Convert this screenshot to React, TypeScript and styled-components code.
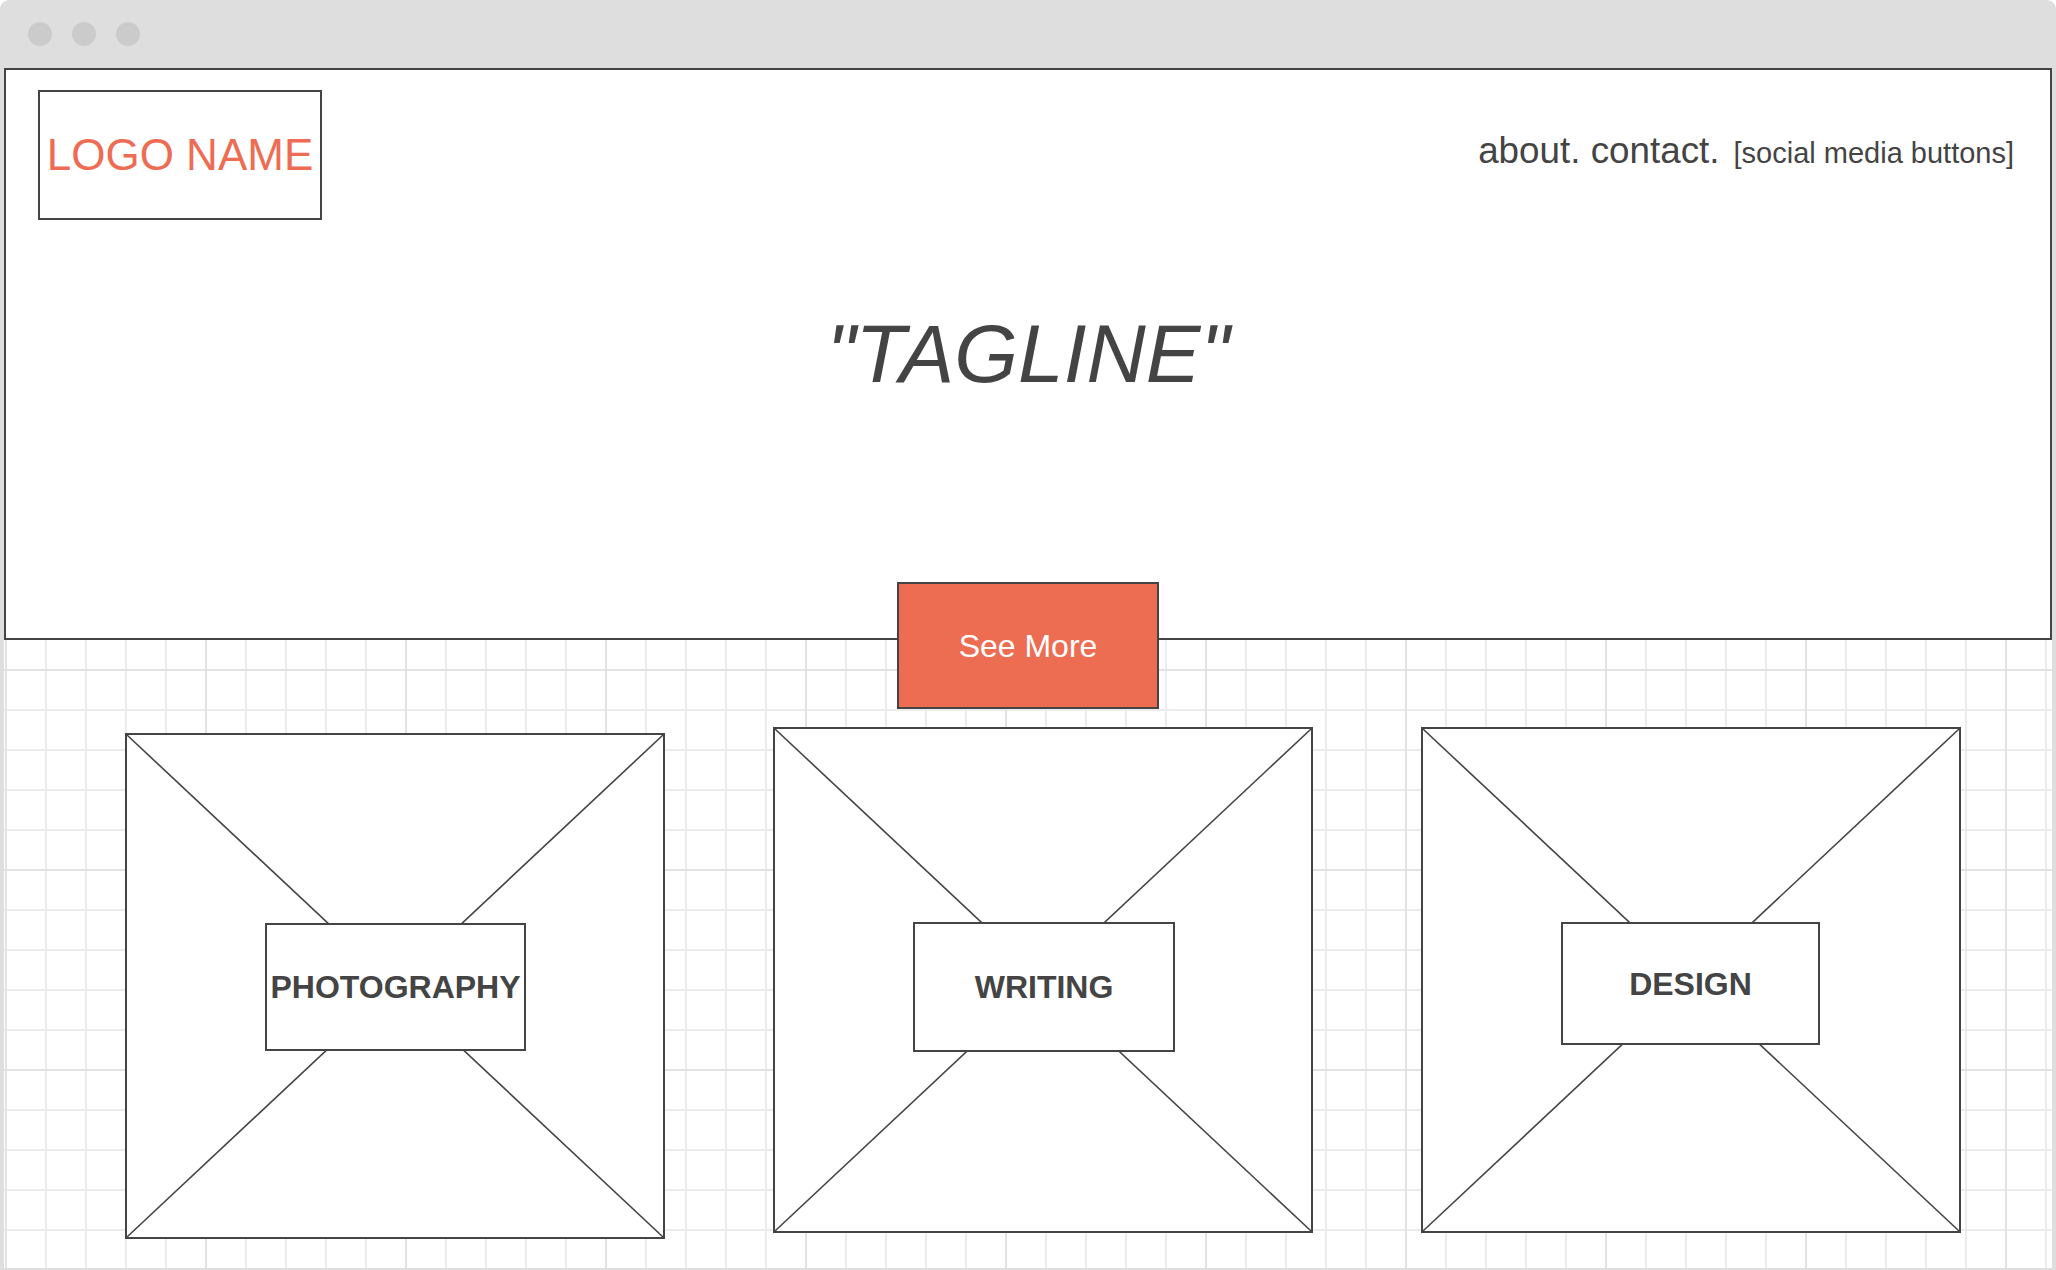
import React from "react";
import styled, { createGlobalStyle } from "styled-components";

const GlobalStyle = createGlobalStyle`
  html, body {
    margin: 0;
    padding: 0;
    background: #ffffff;
  }
  body {
    font-family: "Liberation Sans", Arial, sans-serif;
    color: #444444;
  }
  * { box-sizing: border-box; }
`;

const Window = styled.div`
  width: 2056px;
  height: 1270px;
  display: flex;
  flex-direction: column;
  background: #dedede;
  border-radius: 9px 9px 0 0;
  padding: 0 4px 2px 4px;
  overflow: hidden;
`;

const TitleBar = styled.div`
  height: 68px;
  flex: 0 0 68px;
  display: flex;
  align-items: center;
  gap: 20px;
  padding: 0 0 1px 24px;
`;

const Dot = styled.span`
  width: 24px;
  height: 24px;
  border-radius: 50%;
  background: #cbcbcb;
`;

const Canvas = styled.div`
  flex: 1;
  position: relative;
  background-color: #ffffff;
  background-image:
    linear-gradient(to right, #e2e2e2 2px, transparent 2px),
    linear-gradient(to bottom, #e2e2e2 2px, transparent 2px),
    linear-gradient(to right, #ececec 2px, transparent 2px),
    linear-gradient(to bottom, #ececec 2px, transparent 2px);
  background-size: 200px 200px, 200px 200px, 40px 40px, 40px 40px;
  background-position: 1px 1px, 1px 1px, 1px 1px, 1px 1px;
`;

const Header = styled.header`
  position: relative;
  height: 572px;
  background: #ffffff;
  border: 2px solid #444444;
`;

const TopRow = styled.div`
  display: flex;
  justify-content: space-between;
  align-items: flex-start;
  padding: 20px 36px 0 32px;
`;

const LogoBox = styled.div`
  width: 284px;
  height: 130px;
  border: 2px solid #444444;
  display: flex;
  align-items: center;
  justify-content: center;
  font-size: 44px;
  line-height: 1;
  color: #ee6c53;
  white-space: nowrap;
`;

const Nav = styled.nav`
  display: flex;
  align-items: baseline;
  gap: 14px;
  margin-top: 43px;
  color: #444444;
  line-height: 1;
  white-space: nowrap;
`;

const NavLinks = styled.span`
  font-size: 36.8px;
`;

const Social = styled.span`
  font-size: 29px;
`;

const Tagline = styled.h1`
  margin: 93px 0 0 0;
  text-align: center;
  font-style: italic;
  font-weight: 400;
  font-size: 82px;
  line-height: 1;
  color: #444444;
`;

const SeeMore = styled.button`
  position: absolute;
  left: 50%;
  top: 512px;
  margin-left: -131px;
  width: 262px;
  height: 127px;
  background: #ed6d53;
  border: 2px solid #444444;
  color: #ffffff;
  font-family: "Liberation Sans", Arial, sans-serif;
  font-size: 32px;
  line-height: 1;
  padding: 0;
  display: flex;
  align-items: center;
  justify-content: center;
  cursor: pointer;
`;

const CardRow = styled.section`
  display: flex;
  align-items: flex-start;
  gap: 108px;
  padding: 87px 0 0 121px;
`;

const Card = styled.div<{ $offset: number; $labelTop: number }>`
  position: relative;
  width: 540px;
  height: 506px;
  margin-top: ${(p) => p.$offset}px;
  border: 2px solid #444444;
  background: #ffffff;
  display: flex;
  align-items: flex-start;
  padding: ${(p) => p.$labelTop}px 0 0 138px;
`;

const Cross = styled.svg`
  position: absolute;
  inset: 0;
  width: 100%;
  height: 100%;
  overflow: visible;
`;

const Label = styled.div<{ $w: number; $h: number }>`
  position: relative;
  width: ${(p) => p.$w}px;
  height: ${(p) => p.$h}px;
  border: 2px solid #444444;
  background: #ffffff;
  display: flex;
  align-items: center;
  justify-content: center;
  font-weight: 700;
  font-size: 32px;
  line-height: 1;
  color: #444444;
  white-space: nowrap;
`;

const cards = [
  { title: "PHOTOGRAPHY", offset: 6, top: 188, w: 261, h: 128 },
  { title: "WRITING", offset: 0, top: 193, w: 262, h: 130 },
  { title: "DESIGN", offset: 0, top: 193, w: 259, h: 123 },
];

export default function App() {
  return (
    <>
      <GlobalStyle />
      <Window>
        <TitleBar>
          <Dot />
          <Dot />
          <Dot />
        </TitleBar>
        <Canvas>
          <Header>
            <TopRow>
              <LogoBox>LOGO NAME</LogoBox>
              <Nav>
                <NavLinks>about. contact.</NavLinks>
                <Social>[social media buttons]</Social>
              </Nav>
            </TopRow>
            <Tagline>"TAGLINE"</Tagline>
            <SeeMore>See More</SeeMore>
          </Header>
          <CardRow>
            {cards.map((c) => (
              <Card key={c.title} $offset={c.offset} $labelTop={c.top}>
                <Cross>
                  <line x1="0" y1="0" x2="100%" y2="100%" stroke="#444444" strokeWidth="1.6" />
                  <line x1="100%" y1="0" x2="0" y2="100%" stroke="#444444" strokeWidth="1.6" />
                </Cross>
                <Label $w={c.w} $h={c.h}>{c.title}</Label>
              </Card>
            ))}
          </CardRow>
        </Canvas>
      </Window>
    </>
  );
}
